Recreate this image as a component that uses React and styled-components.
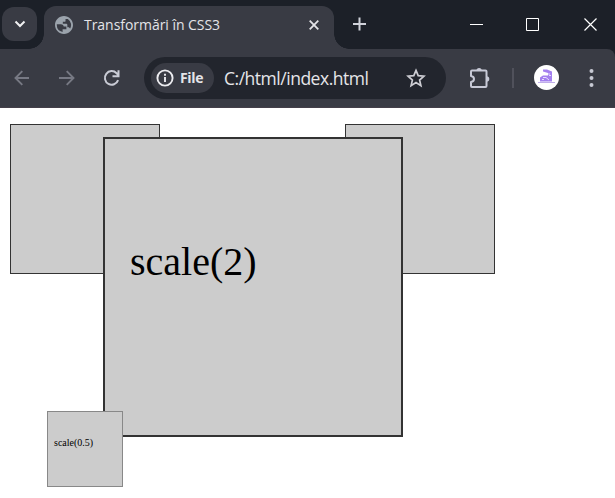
import React from 'react';
import styled, { createGlobalStyle } from 'styled-components';

const Global = createGlobalStyle`
  * { box-sizing: border-box; }
  html, body { margin: 0; background: #fff; overflow: hidden; }
`;

const Window = styled.div`
  width: 615px;
  height: 498px;
  background: #fff;
  overflow: hidden;
  font-family: 'Open Sans', 'Noto Sans', sans-serif;
`;

const TabStrip = styled.header`
  display: flex;
  align-items: flex-start;
  height: 49px;
  background: #1c2028;
`;

const TabSearch = styled.button`
  display: flex;
  align-items: center;
  justify-content: center;
  width: 35px;
  height: 34px;
  margin: 7px 7px 0 2px;
  padding: 0;
  border: 0;
  border-radius: 12px;
  background: #393b44;
`;

const Tab = styled.div`
  position: relative;
  display: flex;
  align-items: center;
  width: 290px;
  height: 43px;
  margin-top: 6px;
  padding: 0 14px 6px 11px;
  border-radius: 12px 12px 0 0;
  background: #393b44;
  &::before, &::after {
    content: '';
    position: absolute;
    bottom: 0;
    width: 15px;
    height: 15px;
  }
  &::before {
    left: -15px;
    background: radial-gradient(circle at 0 0, transparent 14.5px, #393b44 15px);
  }
  &::after {
    right: -15px;
    background: radial-gradient(circle at 100% 0, transparent 14.5px, #393b44 15px);
  }
`;

const TabTitle = styled.span`
  flex: 1;
  margin-left: 11px;
  color: #e4e4e8;
  font-size: 14px;
  line-height: 20px;
  letter-spacing: -0.04px;
  white-space: nowrap;
`;

const NewTab = styled.div`
  display: flex;
  margin: 17px 0 0 18px;
`;

const WindowControls = styled.div`
  display: flex;
  gap: 43px;
  margin: 18px 18px 0 auto;
  svg:last-child { margin-left: 2px; }
`;

const Toolbar = styled.nav`
  display: flex;
  align-items: center;
  height: 59px;
  padding: 0 12px 1px;
  background: #393b44;
  border-bottom: 1px solid #443f49;
  border-top-right-radius: 8px;
`;

const ToolbarBack = styled.div`
  background: #1c2028;
`;

const NavButtons = styled.div`
  display: flex;
  gap: 25px;
  width: 132px;
`;

const AddressBar = styled.div`
  display: flex;
  align-items: center;
  width: 302px;
  height: 42px;
  padding: 0 20px 0 7px;
  border-radius: 21px;
  background: #22252d;
`;

const SiteChip = styled.div`
  display: flex;
  align-items: center;
  gap: 6px;
  width: 63px;
  height: 30px;
  padding-left: 5px;
  border-radius: 15px;
  background: #393b44;
  color: #e4e4e8;
  font-size: 14px;
  font-weight: 700;
  letter-spacing: -0.35px;
`;

const Url = styled.span`
  flex: 1;
  margin-left: 10px;
  color: #e6e6e9;
  font-size: 17.5px;
  line-height: 24px;
  letter-spacing: -0.48px;
  white-space: nowrap;
`;

const Actions = styled.div`
  display: flex;
  align-items: center;
  margin-left: 22px;
`;

const Separator = styled.div`
  width: 2px;
  height: 20px;
  margin: 0 20px;
  background: #50515b;
`;

const Avatar = styled.div`
  display: flex;
  width: 25px;
  height: 25px;
  margin-right: 30px;
  border-radius: 50%;
  background: #fff;
`;

const Page = styled.main`
  position: relative;
  display: flex;
  gap: 185px;
  height: 390px;
  padding: 16px 10px;
  font-family: 'Liberation Serif', serif;
  color: #000;
`;

const Box = styled.div`
  width: 150px;
  height: 150px;
  border: 1px solid #333;
  background: #ccc;
`;

const ScaledBox = styled.div`
  position: absolute;
  left: ${(p) => p.$x}px;
  top: ${(p) => p.$y}px;
  width: ${(p) => p.$size}px;
  height: ${(p) => p.$size}px;
  padding: ${(p) => p.$pad};
  border: ${(p) => p.$border};
  background: #ccc;
  font-size: ${(p) => p.$font}px;
  line-height: 1.15;
`;

const Icon = ({ w = 20, h = w, box, children, color = '#c7c9d3', stroke = 2 }) => (
  <svg width={w} height={h} viewBox={box || `0 0 ${w} ${h}`} fill="none" stroke={color} strokeWidth={stroke}>
    {children}
  </svg>
);

export default function App() {
  return (
    <Window>
      <Global />
      <TabStrip>
        <TabSearch>
          <Icon w={12} h={8} color="#f0f0f2"><path d="M1.5 1.5 6 6l4.5-4.5" /></Icon>
        </TabSearch>
        <Tab>
          <Icon w={18} box="2 2 20 20" stroke={0}>
            <path fill="#9ba3ac" d="M12 2C6.48 2 2 6.48 2 12s4.48 10 10 10 10-4.48 10-10S17.52 2 12 2zm-8 10c0-.3.02-.6.05-.9h4.5c2 0 3.1 1 3.1 2.7h3v3h-4.2v2.9A8 8 0 0 1 4 12zm14.7 4.2c-.3-.9-1-1.6-2-1.6h-1v-3c0-.6-.4-1-1-1h-4V8.5h2c.6 0 1-.4 1-1V5.3h2.5A8 8 0 0 1 18.7 16.2z" />
          </Icon>
          <TabTitle>Transformări în CSS3</TabTitle>
          <Icon w={12} color="#e4e4e8" stroke={1.8}><path d="m1.7 1.7 8.6 8.6m0-8.6-8.6 8.6" /></Icon>
        </Tab>
        <NewTab><Icon w={14} color="#d0d2da"><path d="M7.500 .5v13M1 7h13" /></Icon></NewTab>
        <WindowControls>
          <Icon w={13} color="#fff" stroke={1}><path d="M0 6.5h13" /></Icon>
          <Icon w={13} color="#fff" stroke={1}><path d="M.5.5h12v12H.5z" /></Icon>
          <Icon w={13} color="#fff" stroke={1.2}><path d="m.5.5 12 12m0-12-12 12" /></Icon>
        </WindowControls>
      </TabStrip>
      <ToolbarBack>
        <Toolbar>
          <NavButtons>
            <Icon w={20} color="#777984" stroke={1.9}><path d="M17 10H3.5m6.8-6.8L3.5 10l6.8 6.8" /></Icon>
            <Icon w={20} color="#777984" stroke={1.9}><path d="M2 10h14.500M9.7 3.2l6.8 6.8-6.8 6.8" /></Icon>
            <Icon w={20} color="#c9cbd5"><path d="M16.1 12.2A6.8 6.8 0 1 1 14.6 5.2L16.3 7M16.5 2.3v6H10.5" /></Icon>
          </NavButtons>
          <AddressBar>
            <SiteChip>
              <Icon w={18} color="#ececf0" stroke={1.9}><circle cx="9" cy="9" r="7.6" /><path d="M9 8v5M9 4.8v2" /></Icon>
              <span>File</span>
            </SiteChip>
            <Url>C:/html/index.html</Url>
            <Icon w={20} color="#cdcdd3" stroke={1.7}><path d="m10 2.4 2.2 5.3 5.7.5-4.3 3.8 1.3 5.6-4.9-3-4.9 3L6.4 12 2.1 8.2l5.7-.5z" /></Icon>
          </AddressBar>
          <Actions>
            <Icon w={24} color="#c7c9d6" stroke={2}>
              <path strokeLinejoin="round" d="M4 4.500h13.500q1 0 1 1v14.500q0 1-1 1H4q-1 0-1-1v-4q3-.4 3-3t-3-3V5.500q0-1 1-1z" />
              <path fill="#c7c9d6" stroke="none" d="M8.500 4.500a2.600 2.600 0 0 1 5.200 0zM18.500 10.200a2.800 2.800 0 0 1 0 5.600z" />
            </Icon>
            <Separator />
            <Avatar>
              <svg width="25" height="25" viewBox="0 0 25 25">
                <path fill="#a480ef" d="M9 4.500h4l5 2V16.500H6v-4l3-2h5V8L9 6.500z" />
                <path stroke="#e6dcff" strokeWidth="1" fill="none" d="M9 12.500h3m3-2h2M8 14.500h2m2-2 3 2.500M14 9h2" />
                <path stroke="#c0aeea" strokeWidth="1" d="M4 17.500h17" />
              </svg>
            </Avatar>
            <svg width="5" height="20" viewBox="0 0 5 20" fill="#c7c9d3">
              <circle cx="2.5" cy="3" r="2" /><circle cx="2.5" cy="10" r="2" /><circle cx="2.5" cy="17" r="2" />
            </svg>
          </Actions>
        </Toolbar>
      </ToolbarBack>
      <Page>
        <Box />
        <Box />
        <ScaledBox $x={103} $y={29} $size={300} $pad="100px 0 0 25px" $border="2px solid #333" $font={40}>scale(2)</ScaledBox>
        <ScaledBox $x={47} $y={303} $size={76} $pad="25px 0 0 6px" $border="1px solid #888" $font={10}>scale(0.5)</ScaledBox>
      </Page>
    </Window>
  );
}
